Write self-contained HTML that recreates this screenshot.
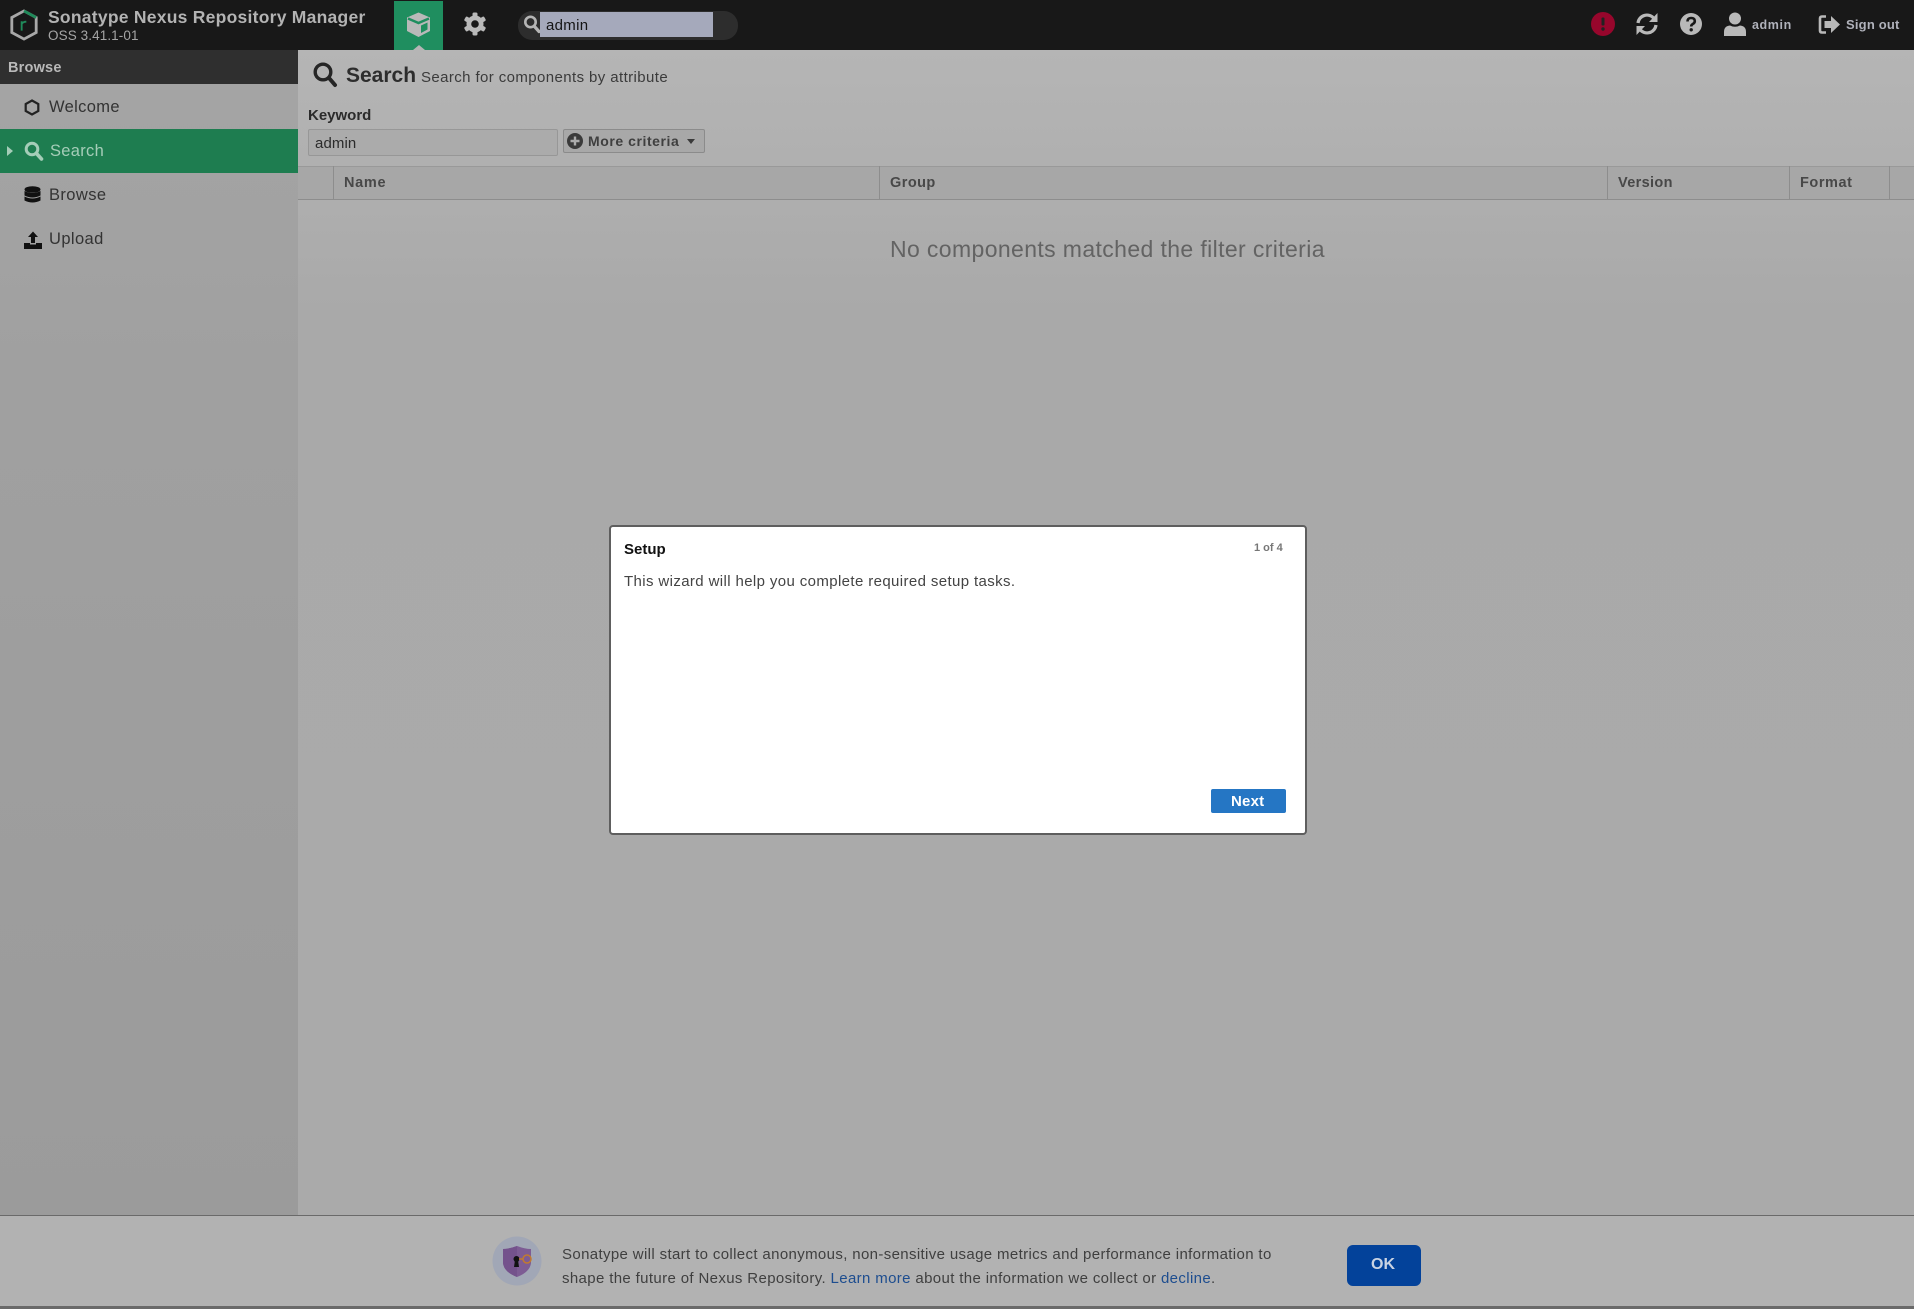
<!DOCTYPE html>
<html><head><meta charset="utf-8"><title>Nexus Repository Manager</title>
<style>
html,body{margin:0;padding:0;width:1914px;height:1309px;overflow:hidden;background:#aaa}
body{font-family:"Liberation Sans",sans-serif;position:relative}
.a{position:absolute;white-space:nowrap}
.t{position:absolute;white-space:nowrap;line-height:1}
svg{position:absolute;display:block}
</style></head><body>
<!-- content bg -->
<div class="a" style="left:298px;top:50px;width:1616px;height:1165px;background:linear-gradient(#b5b5b5 0,#b0b0b0 110px,#a9a9a9 260px,#aaa 100%)"></div>
<!-- sidebar -->
<div class="a" style="left:0;top:84px;width:298px;height:1131px;background:linear-gradient(#a4a4a4 0,#a0a0a0 300px,#9b9b9b 100%)"></div>
<!-- header -->
<div class="a" style="left:0;top:0;width:1914px;height:50px;background:#181818"></div>
<div class="a" style="left:0;top:50px;width:298px;height:34px;background:#2f2f2f"></div>
<div class="t" style="left:8px;top:61px;font-size:14.5px;font-weight:bold;color:#b9b9b9;letter-spacing:.2px">Browse</div>
<!-- logo -->
<svg style="left:9px;top:8px" width="30" height="34" viewBox="0 0 32 36"><path d="M16 3L29 10V26L16 33L3 26V10Z" fill="none" stroke="#a8a8a8" stroke-width="3"/><path d="M16 3L29 10" fill="none" stroke="#1f8a5a" stroke-width="3"/><path d="M13.500 24V14M13.500 17Q15 14.500 18.500 14.500" fill="none" stroke="#1f8a5a" stroke-width="2"/></svg>
<div class="t" style="left:48px;top:9px;font-size:17.500px;font-weight:bold;color:#b3b3b3;letter-spacing:.25px">Sonatype Nexus Repository Manager</div>
<div class="t" style="left:48px;top:29px;font-size:13.500px;color:#a5a5a5;letter-spacing:.1px">OSS 3.41.1-01</div>
<!-- nav tab -->
<div class="a" style="left:394px;top:1px;width:49px;height:49px;background:#1f8e5f"></div>
<div class="a" style="left:413px;top:45px;border-left:6px solid transparent;border-right:6px solid transparent;border-bottom:5px solid #b5b5b5"></div>
<svg style="left:405px;top:11px" width="27" height="27" viewBox="0 0 27 27"><path d="M13.500 1.500L25 6.500V20L13.500 26L2 20V6.500Z" fill="#b9b9b9"/><path d="M3 7.500L13.500 12L24 7.500" fill="none" stroke="#1f8e5f" stroke-width="2.500"/><path d="M16 14.500L22.500 11.500V18.500L16 22Z" fill="#1f8e5f"/></svg>
<svg style="left:463px;top:12px" width="24" height="24" viewBox="0 0 24 24"><g fill="#b9b9b9"><circle cx="12" cy="12" r="8.500"/><rect x="9.500" y="0.500" width="5" height="23" rx="1.500"/><rect x="9.500" y="0.500" width="5" height="23" rx="1.500" transform="rotate(60 12 12)"/><rect x="9.500" y="0.500" width="5" height="23" rx="1.500" transform="rotate(120 12 12)"/></g><circle cx="12" cy="12" r="3.800" fill="#181818"/></svg>
<!-- search -->
<div class="a" style="left:518px;top:11px;width:220px;height:29px;border-radius:14px;background:#2d2d2d"></div>
<svg style="left:523px;top:14px" width="18" height="20" viewBox="0 0 18 20"><circle cx="7.500" cy="8" r="5.200" fill="none" stroke="#b5b5b5" stroke-width="2.600"/><path d="M11.500 12.500L16 17.500" stroke="#b5b5b5" stroke-width="3.200" stroke-linecap="round"/></svg>
<div class="a" style="left:540px;top:12px;width:173px;height:25px;background:#a5a9bb"></div>
<div class="t" style="left:546px;top:18px;font-size:15px;color:#151515;letter-spacing:.3px">admin</div>
<!-- right icons -->
<svg style="left:1591px;top:12px" width="24" height="24" viewBox="0 0 24 24"><circle cx="12" cy="12" r="12" fill="#97062c"/><rect x="10.500" y="5.500" width="3" height="8" rx="1" fill="#222"/><circle cx="12" cy="17" r="1.700" fill="#222"/></svg>
<svg style="left:1635px;top:12px" width="24" height="24" viewBox="0 0 24 24"><g fill="none" stroke="#b9b9b9" stroke-width="3.200"><path d="M3 11A9 9 0 0 1 19 6.500"/><path d="M21 13A9 9 0 0 1 5 17.500"/></g><path d="M22.500 1V10H14Z" fill="#b9b9b9"/><path d="M1.500 23V14H10Z" fill="#b9b9b9"/></svg>
<svg style="left:1680px;top:13px" width="22" height="22" viewBox="0 0 22 22"><circle cx="11" cy="11" r="11" fill="#b9b9b9"/><path d="M7.500 8.500Q7.500 5 11 5Q14.800 5 14.800 8Q14.800 10 12.800 11Q11.200 11.900 11.200 13.500" fill="none" stroke="#181818" stroke-width="2.600"/><circle cx="11.200" cy="16.800" r="1.700" fill="#181818"/></svg>
<svg style="left:1724px;top:12px" width="22" height="24" viewBox="0 0 22 24"><circle cx="11" cy="6.500" r="6" fill="#b9b9b9"/><path d="M0 24V20Q0 14 6 13.500Q11 16 16 13.500Q22 14 22 20V24Z" fill="#b9b9b9"/></svg>
<div class="t" style="left:1752px;top:19px;font-size:12.500px;font-weight:bold;color:#b0b2bb;letter-spacing:.6px">admin</div>
<svg style="left:1818px;top:14px" width="23" height="21" viewBox="0 0 23 21"><path d="M8 2.500H4Q2 2.500 2 4.500V16.500Q2 18.500 4 18.500H8" fill="none" stroke="#b9b9b9" stroke-width="2.600"/><path d="M6.500 7H13V2L22 10.500L13 19V14H6.500Z" fill="#b9b9b9"/></svg>
<div class="t" style="left:1846px;top:18px;font-size:13px;font-weight:bold;color:#b0b2bb;letter-spacing:.2px">Sign out</div>
<!-- sidebar items -->
<svg style="left:24px;top:99px" width="16" height="17" viewBox="0 0 16 17"><path d="M8 1.500L14.300 5V12L8 15.500L1.700 12V5Z" fill="none" stroke="#222" stroke-width="2.200"/></svg>
<div class="t" style="left:49px;top:99px;font-size:16.500px;color:#333;letter-spacing:.35px">Welcome</div>
<div class="a" style="left:0;top:129px;width:298px;height:44px;background:#1e7d50"></div>
<div class="a" style="left:7px;top:146px;border-top:5px solid transparent;border-bottom:5px solid transparent;border-left:6px solid #a5cdb8"></div>
<svg style="left:24px;top:141px" width="20" height="21" viewBox="0 0 20 21"><circle cx="8" cy="8" r="5.800" fill="none" stroke="#a5cdb8" stroke-width="3"/><path d="M12.500 12.500L17.500 18" stroke="#a5cdb8" stroke-width="3.600" stroke-linecap="round"/></svg>
<div class="t" style="left:50px;top:143px;font-size:16.500px;color:#a5cdb8;letter-spacing:.3px">Search</div>
<svg style="left:24px;top:186px" width="17" height="18" viewBox="0 0 17 18"><g fill="#111"><ellipse cx="8.500" cy="3.500" rx="8" ry="3.300"/><path d="M.5 5Q8.500 9 16.500 5V9.500Q8.500 13.500 .5 9.500Z"/><path d="M.5 10.500Q8.500 14.500 16.500 10.500V14.500Q8.500 18.500 .5 14.500Z"/></g></svg>
<div class="t" style="left:49px;top:187px;font-size:16.500px;color:#333;letter-spacing:.4px">Browse</div>
<svg style="left:24px;top:231px" width="18" height="18" viewBox="0 0 18 18"><path d="M9 .5L14 6H11V12H7V6H4Z" fill="#111"/><path d="M0 12H6V13.500H12V12H18V18H0Z" fill="#111"/></svg>
<div class="t" style="left:49px;top:231px;font-size:16.500px;color:#333;letter-spacing:.4px">Upload</div>
<!-- page title -->
<svg style="left:312px;top:61px" width="26" height="27" viewBox="0 0 26 27"><circle cx="11" cy="11" r="7.800" fill="none" stroke="#262626" stroke-width="3.400"/><path d="M17 17L23 24" stroke="#262626" stroke-width="4" stroke-linecap="round"/></svg>
<div class="t" style="left:346px;top:65px;font-size:21px;font-weight:bold;color:#2d2d2d">Search</div>
<div class="t" style="left:421px;top:70px;font-size:15px;color:#3b3b3b;letter-spacing:.4px">Search for components by attribute</div>
<div class="t" style="left:308px;top:108px;font-size:15px;font-weight:bold;color:#2b2b2b">Keyword</div>
<div class="a" style="left:308px;top:129px;width:248px;height:25px;border:1px solid #979797;border-radius:2px;background:#ababab"></div>
<div class="t" style="left:315px;top:136px;font-size:15px;color:#2b2b2b;letter-spacing:.1px">admin</div>
<div class="a" style="left:563px;top:129px;width:140px;height:22px;border:1px solid #8b8b8b;border-radius:2px;background:#a8a8a8"></div>
<svg style="left:567px;top:133px" width="16" height="16" viewBox="0 0 16 16"><circle cx="8" cy="8" r="8" fill="#3a3a3a"/><path d="M8 3.500V12.500M3.500 8H12.500" stroke="#ababab" stroke-width="2.400"/></svg>
<div class="t" style="left:588px;top:134px;font-size:14px;font-weight:bold;color:#3f3f3f;letter-spacing:.56px">More criteria</div>
<div class="a" style="left:687px;top:139px;border-left:4.500px solid transparent;border-right:4.500px solid transparent;border-top:5px solid #3a3a3a"></div>
<!-- table header -->
<div class="a" style="left:298px;top:166px;width:1616px;height:34px;background:#a7a7a7;border-top:1px solid #999;border-bottom:1px solid #8d8d8d;box-sizing:border-box"></div>
<div class="a" style="left:333px;top:166px;width:1px;height:34px;background:#8d8d8d"></div>
<div class="a" style="left:879px;top:166px;width:1px;height:34px;background:#8d8d8d"></div>
<div class="a" style="left:1607px;top:166px;width:1px;height:34px;background:#8d8d8d"></div>
<div class="a" style="left:1789px;top:166px;width:1px;height:34px;background:#8d8d8d"></div>
<div class="a" style="left:1889px;top:166px;width:1px;height:34px;background:#8d8d8d"></div>
<div class="t" style="left:344px;top:176px;font-size:14.500px;font-weight:bold;color:#484848;letter-spacing:.7px">Name</div>
<div class="t" style="left:890px;top:176px;font-size:14.500px;font-weight:bold;color:#484848;letter-spacing:.45px">Group</div>
<div class="t" style="left:1618px;top:176px;font-size:14.500px;font-weight:bold;color:#484848;letter-spacing:.35px">Version</div>
<div class="t" style="left:1800px;top:176px;font-size:14.500px;font-weight:bold;color:#484848;letter-spacing:.55px">Format</div>
<div class="t" style="left:890px;top:238px;font-size:23px;color:#636363;letter-spacing:.38px">No components matched the filter criteria</div>
<!-- dialog -->
<div class="a" style="left:609px;top:525px;width:694px;height:306px;background:#fff;border:2px solid #5e5e5e;border-radius:4px"></div>
<div class="t" style="left:624px;top:542px;font-size:15px;font-weight:bold;color:#111">Setup</div>
<div class="t" style="left:1254px;top:543px;font-size:11px;font-weight:bold;color:#777">1 of 4</div>
<div class="t" style="left:624px;top:574px;font-size:15px;color:#444;letter-spacing:.38px">This wizard will help you complete required setup tasks.</div>
<div class="a" style="left:1211px;top:789px;width:75px;height:24px;background:#2576c4;border-radius:2px"></div>
<div class="t" style="left:1231px;top:794px;font-size:15px;font-weight:bold;color:#fff;letter-spacing:.2px">Next</div>
<!-- banner -->
<div class="a" style="left:0;top:1215px;width:1914px;height:94px;background:#b2b2b2;border-top:1px solid #6a6a6a;border-bottom:3px solid #6a6a6a;box-sizing:border-box"></div>
<svg style="left:492px;top:1236px" width="50" height="50" viewBox="0 0 50 50"><circle cx="25" cy="25" r="24.500" fill="#a1a7b6"/><path d="M25 10Q33 13 39 13V27Q38 36 25 41Q12 36 11 27V13Q17 13 25 10Z" fill="#7d5c94"/><path d="M25 10V41Q12 36 11 27V13Q17 13 25 10Z" fill="#74528c"/><circle cx="24.500" cy="23" r="3" fill="#111"/><path d="M23 24H26L27 31H22Z" fill="#111"/><circle cx="35" cy="23" r="4" fill="none" stroke="#c27a2e" stroke-width="1.500"/><path d="M27 23H31" stroke="#c27a2e" stroke-width="1.500"/></svg>
<div class="t" style="left:562px;top:1243px;font-size:15px;color:#3f3f3f;line-height:24px;letter-spacing:.36px">Sonatype will start to collect anonymous, non-sensitive usage metrics and performance information to<br>shape the future of Nexus Repository. <span style="color:#1d4d8f">Learn more</span> about the information we collect or <span style="color:#1d4d8f">decline</span>.</div>
<div class="a" style="left:1347px;top:1245px;width:74px;height:41px;background:#03429a;border-radius:6px"></div>
<div class="t" style="left:1371px;top:1257px;font-size:16px;font-weight:bold;color:#c9d3e3">OK</div>
</body></html>
